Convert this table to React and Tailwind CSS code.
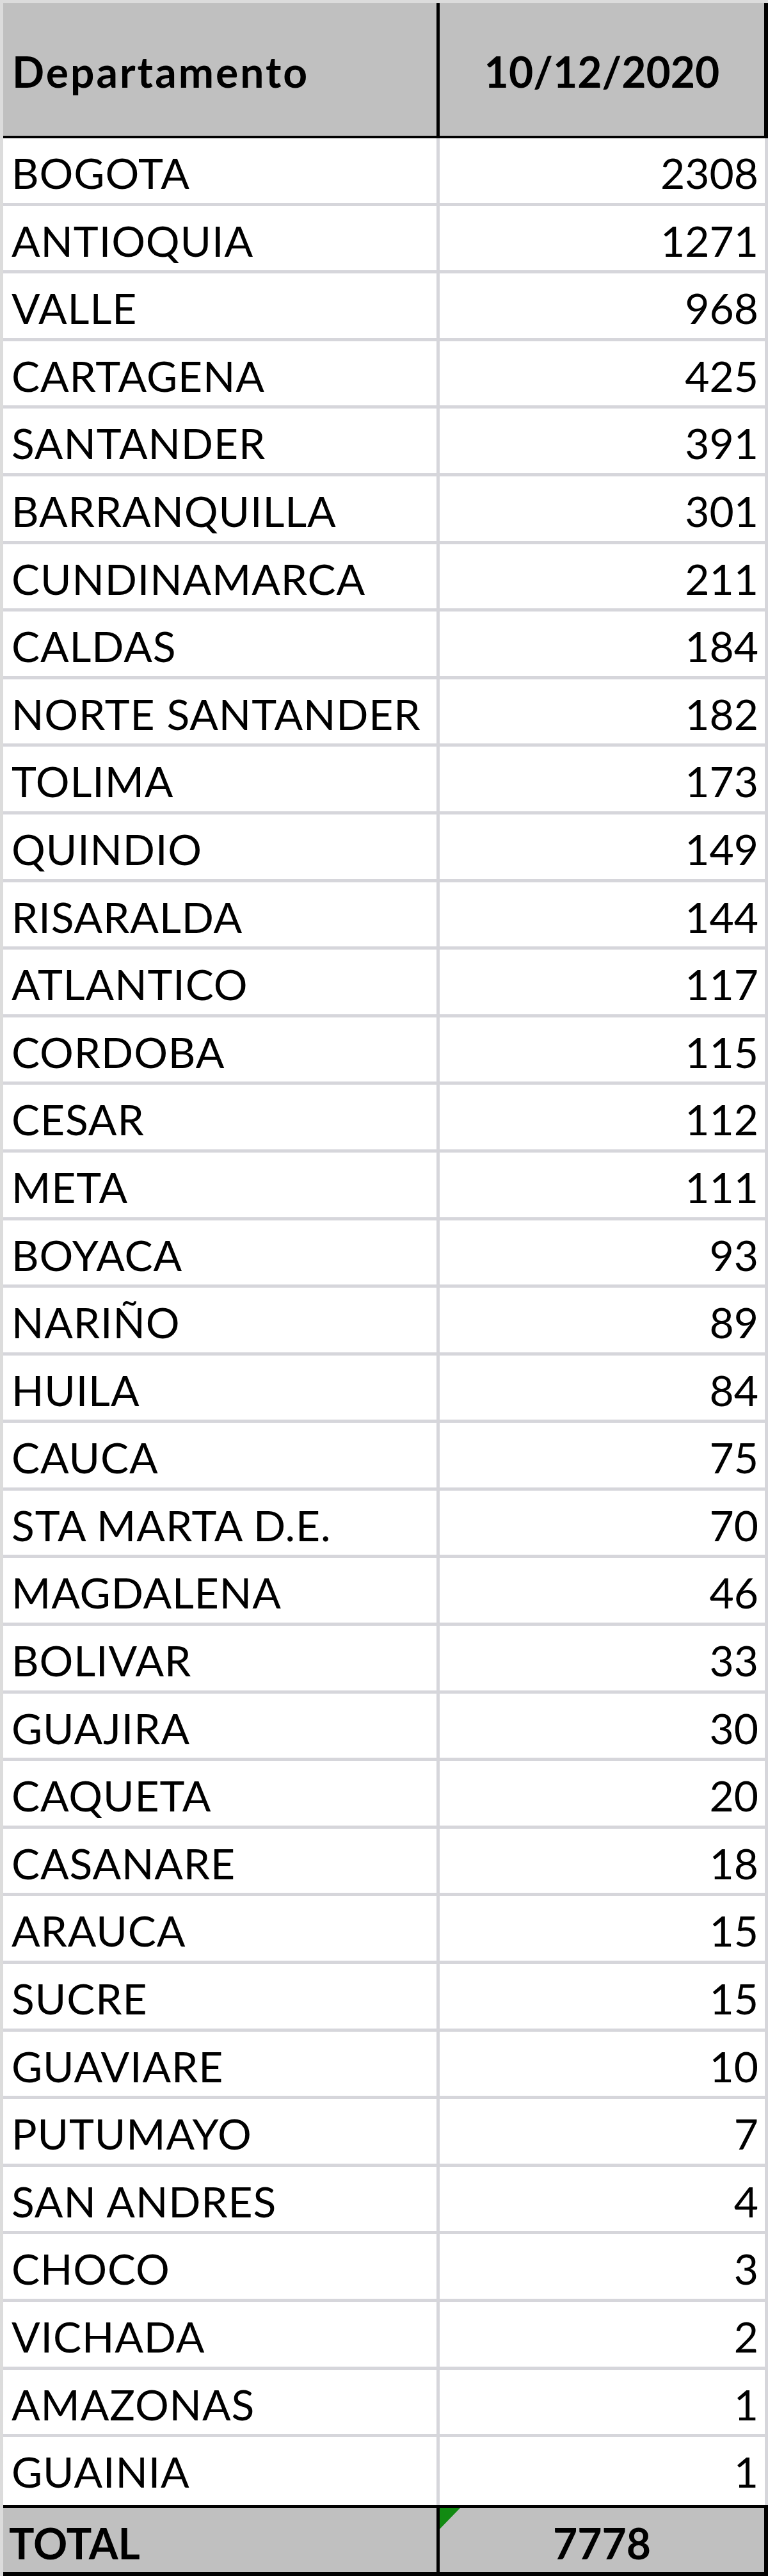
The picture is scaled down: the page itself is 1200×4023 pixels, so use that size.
import React from "react";

const rows = [
  ["BOGOTA", "2308"],
  ["ANTIOQUIA", "1271"],
  ["VALLE", "968"],
  ["CARTAGENA", "425"],
  ["SANTANDER", "391"],
  ["BARRANQUILLA", "301"],
  ["CUNDINAMARCA", "211"],
  ["CALDAS", "184"],
  ["NORTE SANTANDER", "182"],
  ["TOLIMA", "173"],
  ["QUINDIO", "149"],
  ["RISARALDA", "144"],
  ["ATLANTICO", "117"],
  ["CORDOBA", "115"],
  ["CESAR", "112"],
  ["META", "111"],
  ["BOYACA", "93"],
  ["NARIÑO", "89"],
  ["HUILA", "84"],
  ["CAUCA", "75"],
  ["STA MARTA D.E.", "70"],
  ["MAGDALENA", "46"],
  ["BOLIVAR", "33"],
  ["GUAJIRA", "30"],
  ["CAQUETA", "20"],
  ["CASANARE", "18"],
  ["ARAUCA", "15"],
  ["SUCRE", "15"],
  ["GUAVIARE", "10"],
  ["PUTUMAYO", "7"],
  ["SAN ANDRES", "4"],
  ["CHOCO", "3"],
  ["VICHADA", "2"],
  ["AMAZONAS", "1"],
  ["GUAINIA", "1"],
];

export default function App() {
  return (
    <div className="w-[1200px] h-[4023px] bg-white border-l-[5px] border-t-[5px] border-l-[#dcdcdc] border-t-[#dcdcdc] font-['Lato','Liberation_Sans',sans-serif] text-[66px] leading-none text-black">
      {/* Header */}
      <div className="flex h-[211px] border-b-[4px] border-r-[6px] border-black bg-[#c0c0c0] font-bold">
        <div className="w-[682px] border-r-[5px] border-black pl-[14px] pt-[74px] whitespace-nowrap tracking-[3px]">
          Departamento
        </div>
        <div className="flex-1 flex justify-center pt-[74px] whitespace-nowrap">
          10/12/2020
        </div>
      </div>

      {/* Body */}
      <div className="flex flex-col">
        {rows.map(([name, value]) => (
          <div
            key={name}
            className="flex h-[105.6px] border-b-[5px] border-r-[5px] border-[#d6d6db] last:border-b-0"
          >
            <div className="w-[682px] border-r-[5px] border-[#d6d6db] pl-[13px] pt-[21px] whitespace-nowrap tracking-[0.9px]">
              {name}
            </div>
            <div className="flex-1 flex justify-end pr-[10px] pt-[21px]">
              {value}
            </div>
          </div>
        ))}
      </div>

      {/* Total */}
      <div className="flex h-[111px] border-t-[5px] border-b-[6px] border-r-[6px] border-black bg-[#c0c0c0] font-bold">
        <div className="w-[682px] border-r-[5px] border-black pl-[9px] pt-[22px]">
          TOTAL
        </div>
        <div className="relative flex-1 flex justify-center pt-[22px]">
          <div className="absolute left-0 top-0 w-[32px] h-[33px] bg-[#128a12] [clip-path:polygon(0_0,100%_0,0_100%)]" />
          7778
        </div>
      </div>
    </div>
  );
}
